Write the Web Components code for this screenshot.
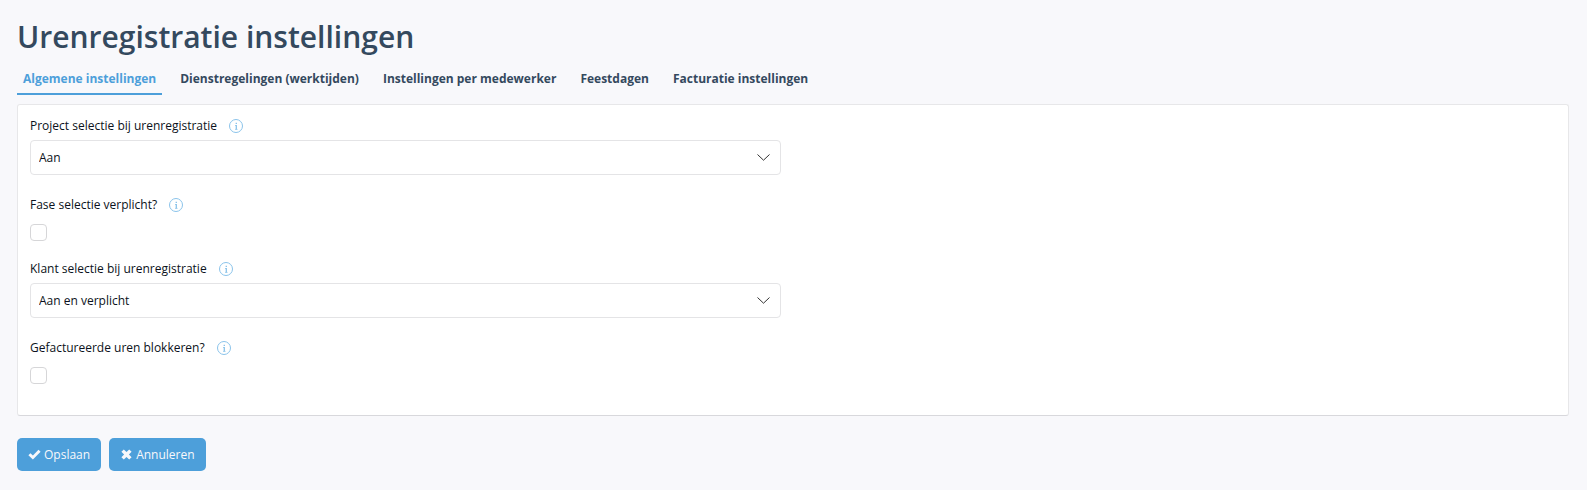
<!DOCTYPE html>
<html lang="nl">
<head>
<meta charset="utf-8">
<meta name="viewport" content="width=device-width, initial-scale=1">
<title>Urenregistratie instellingen</title>
<style>
    body {
        margin: 0;
        background: #f8f8fb;
        color: #0b1220;
        font: 12px/20px "Open Sans", "Liberation Sans", sans-serif;
    }
</style>
</head>
<body>
<settings-page heading="Urenregistratie instellingen">
    <settings-tab slot="tabs" active>Algemene instellingen</settings-tab>
    <settings-tab slot="tabs">Dienstregelingen (werktijden)</settings-tab>
    <settings-tab slot="tabs">Instellingen per medewerker</settings-tab>
    <settings-tab slot="tabs">Feestdagen</settings-tab>
    <settings-tab slot="tabs">Facturatie instellingen</settings-tab>

    <select-field label="Project selectie bij urenregistratie" options="Aan|Aan en verplicht|Uit" value="Aan"></select-field>
    <check-field label="Fase selectie verplicht?"></check-field>
    <select-field label="Klant selectie bij urenregistratie" options="Aan|Aan en verplicht|Uit" value="Aan en verplicht"></select-field>
    <check-field label="Gefactureerde uren blokkeren?"></check-field>

    <action-button slot="actions" icon="check">Opslaan</action-button>
    <action-button slot="actions" icon="times">Annuleren</action-button>
</settings-page>

<script>
// Page shell: heading, tabs, panel and actions
class SettingsPage extends HTMLElement {
    connectedCallback() {
        this.attachShadow({ mode: 'open' });
        this.shadowRoot.innerHTML = `
            <style>
                :host {
                    display: block;
                    padding: 16px 18px 18px 17px;
                }

                h1 {
                    margin: 0;
                    color: #34495e;
                    font-size: 30px;
                    line-height: 42px;
                    font-weight: 600;
                }

                nav {
                    display: flex;
                    flex-wrap: wrap;
                    gap: 12px;
                    margin-top: 8px;
                }

                .panel {
                    margin-top: 9px;
                    padding: 11px 12px 13px;
                    background: #fff;
                    border: 1px solid #e7e7e9;
                    border-bottom-color: #d8d8dc;
                    border-radius: 3px;
                }

                .actions {
                    display: flex;
                    gap: 8px;
                    margin-top: 22px;
                }
            </style>

            <h1></h1>
            <nav><slot name="tabs"></slot></nav>
            <div class="panel"><slot></slot></div>
            <div class="actions"><slot name="actions"></slot></div>
        `;
        this.shadowRoot.querySelector('h1').textContent = this.getAttribute('heading');
    }
}

class SettingsTab extends HTMLElement {
    connectedCallback() {
        this.attachShadow({ mode: 'open' });
        this.shadowRoot.innerHTML = `
            <style>
                :host {
                    display: block;
                }

                a {
                    display: block;
                    padding: 3px 6px 4px;
                    border-bottom: 2px solid transparent;
                    color: #34495e;
                    font-weight: 700;
                    text-decoration: none;
                }

                :host([active]) a {
                    color: #4d9fda;
                    border-bottom-color: #4d9fda;
                }
            </style>
            <a href="#"><slot></slot></a>
        `;
    }
}

class InfoIcon extends HTMLElement {
    connectedCallback() {
        this.attachShadow({ mode: 'open' });
        this.shadowRoot.innerHTML = `
            <style>
                :host {
                    display: block;
                    height: 14px;
                }

                svg {
                    display: block;
                }
            </style>
            <svg width="14" height="14" viewBox="0 0 14 14" fill="none" stroke="#8ac3ea" aria-hidden="true">
                <circle cx="7" cy="7" r="6.500"/>
                <path d="M6 6.500h1" stroke-width=".8"/>
                <path d="M7.300 6v4.500" stroke-width="1.300"/>
                <path d="M6 10.400h2.600" stroke-width=".7"/>
                <path d="M6.600 4.300h1.400" stroke-width="1.300"/>
            </svg>
        `;
    }
}

class SelectField extends HTMLElement {
    connectedCallback() {
        this.attachShadow({ mode: 'open' });
        this.shadowRoot.innerHTML = `
            <style>
                :host {
                    display: block;
                    box-sizing: border-box;
                    width: 50%;
                    padding: 0 12px 20px 0;
                }

                .label {
                    display: flex;
                    align-items: center;
                    gap: 12px;
                    margin-bottom: 4px;
                }

                .control {
                    display: grid;
                    align-items: center;
                }

                select,
                svg {
                    grid-area: 1 / 1;
                }

                select {
                    appearance: none;
                    width: 100%;
                    height: 35px;
                    margin: 0;
                    padding: 0 32px 0 8px;
                    border: 1px solid #e4e4e6;
                    border-radius: 4px;
                    background: #fff;
                    color: inherit;
                    font: inherit;
                }

                svg {
                    justify-self: end;
                    margin-right: 11px;
                    pointer-events: none;
                }
            </style>
            <div class="label">
                <label for="field"></label>
                <info-icon></info-icon>
            </div>
            <div class="control">
                <select id="field"></select>
                <svg width="13" height="7" viewBox="0 0 13 7" fill="none" stroke="#333" aria-hidden="true">
                    <path d="M.5 .5l6 5.700 6-5.700"/>
                </svg>
            </div>
        `;
        this.shadowRoot.querySelector('label').textContent = this.getAttribute('label');

        const select = this.shadowRoot.querySelector('select');
        this.getAttribute('options').split('|').forEach(text => select.add(new Option(text)));
        select.value = this.getAttribute('value');
    }
}

class CheckField extends HTMLElement {
    connectedCallback() {
        this.attachShadow({ mode: 'open' });
        this.shadowRoot.innerHTML = `
            <style>
                :host {
                    display: block;
                    padding-bottom: 18px;
                }

                .label {
                    display: flex;
                    align-items: center;
                    gap: 12px;
                    margin-bottom: 9px;
                }

                input {
                    appearance: none;
                    display: block;
                    width: 17px;
                    height: 17px;
                    margin: 0;
                    border: 1px solid #d6d6d8;
                    border-radius: 4px;
                    background: #fff;
                }

                input:checked {
                    background: #4d9fda;
                }
            </style>
            <div class="label">
                <label for="field"></label>
                <info-icon></info-icon>
            </div>
            <input type="checkbox" id="field">
        `;
        this.shadowRoot.querySelector('label').textContent = this.getAttribute('label');
    }
}

const BUTTON_ICONS = {
    check: '<svg width="13" height="11" viewBox="0 0 13 11" fill="currentColor"><path d="M.4 6.200 2.400 4.200 4.900 6.600 10.500 .8 12.600 2.800 4.900 10.600z"/></svg>',
    times: '<svg width="13" height="11" viewBox="-1 0 13 11" fill="currentColor"><path d="M2.800 .4 5.500 3.100 8.200 .4 10.600 2.800 7.900 5.500 10.600 8.200 8.200 10.600 5.500 7.900 2.800 10.600 .4 8.200 3.100 5.500 .4 2.800z"/></svg>'
};

class ActionButton extends HTMLElement {
    connectedCallback() {
        this.attachShadow({ mode: 'open' });
        this.shadowRoot.innerHTML = `
            <style>
                :host {
                    display: block;
                }

                button {
                    display: flex;
                    align-items: center;
                    gap: 3px;
                    height: 33px;
                    padding: 0 11px;
                    border: 0;
                    border-radius: 5px;
                    background: #4d9fda;
                    color: #f8f8fb;
                    font: inherit;
                    cursor: pointer;
                }
            </style>
            <button type="button">${BUTTON_ICONS[this.getAttribute('icon')]}<slot></slot></button>
        `;
    }
}

customElements.define('info-icon', InfoIcon);
customElements.define('settings-page', SettingsPage);
customElements.define('settings-tab', SettingsTab);
customElements.define('select-field', SelectField);
customElements.define('check-field', CheckField);
customElements.define('action-button', ActionButton);
</script>
</body>
</html>
